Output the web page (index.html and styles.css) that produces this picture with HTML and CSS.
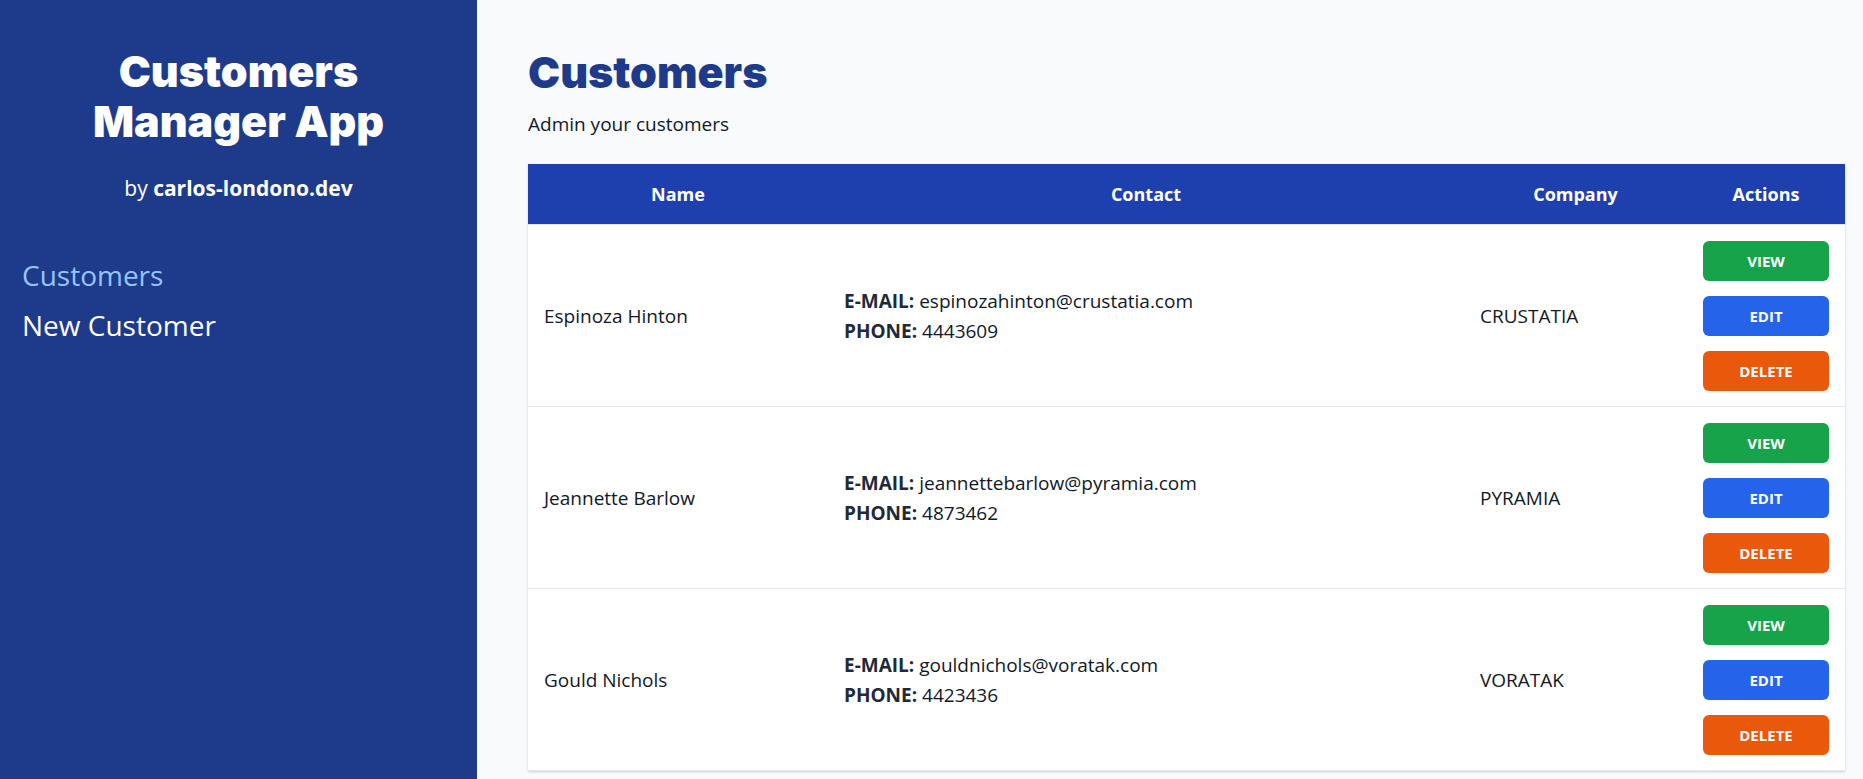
FILE: index.html
```html
<!DOCTYPE html>
<html lang="en">
<head>
<meta charset="utf-8">
<title>Customers Manager App</title>
<link rel="stylesheet" href="styles.css">
</head>
<body>
<div class="layout">
  <aside class="sidebar">
    <h1 class="brand">Customers Manager App</h1>
    <p class="byline">by <strong>carlos-londono.dev</strong></p>
    <nav class="nav">
      <a class="nav-link active" href="#">Customers</a>
      <a class="nav-link" href="#">New Customer</a>
    </nav>
  </aside>
  <main class="main">
    <h2 class="page-title">Customers</h2>
    <p class="page-sub">Admin your customers</p>
    <table class="table">
      <colgroup>
        <col class="col-name">
        <col class="col-contact">
        <col class="col-company">
        <col class="col-actions">
      </colgroup>
      <thead>
        <tr>
          <th>Name</th>
          <th>Contact</th>
          <th>Company</th>
          <th>Actions</th>
        </tr>
      </thead>
      <tbody>
        <tr>
          <td>Espinoza Hinton</td>
          <td><p class="line"><b>E-MAIL:</b> espinozahinton@crustatia.com</p><p class="line"><b>PHONE:</b> 4443609</p></td>
          <td>CRUSTATIA</td>
          <td class="actions"><button class="btn btn-view">View</button><button class="btn btn-edit">Edit</button><button class="btn btn-delete">Delete</button></td>
        </tr>
        <tr>
          <td>Jeannette Barlow</td>
          <td><p class="line"><b>E-MAIL:</b> jeannettebarlow@pyramia.com</p><p class="line"><b>PHONE:</b> 4873462</p></td>
          <td>PYRAMIA</td>
          <td class="actions"><button class="btn btn-view">View</button><button class="btn btn-edit">Edit</button><button class="btn btn-delete">Delete</button></td>
        </tr>
        <tr>
          <td>Gould Nichols</td>
          <td><p class="line"><b>E-MAIL:</b> gouldnichols@voratak.com</p><p class="line"><b>PHONE:</b> 4423436</p></td>
          <td>VORATAK</td>
          <td class="actions"><button class="btn btn-view">View</button><button class="btn btn-edit">Edit</button><button class="btn btn-delete">Delete</button></td>
        </tr>
      </tbody>
    </table>
  </main>
</div>
</body>
</html>
```
FILE: styles.css
```css
* { box-sizing: border-box; }
html, body { margin: 0; padding: 0; height: 100%; }
body {
  font-family: "Open Sans", "Noto Sans", sans-serif;
  color: #111827;
  background: #f8fafc;
  overflow: hidden;
}
.layout {
  display: flex;
  height: 100vh;
}
.sidebar {
  width: 477px;
  flex: none;
  background: #1e3a8a;
  color: #fff;
  padding: 46px 0 0 0;
}
.brand {
  margin: 0 auto;
  width: 340px;
  text-align: center;
  font-family: "Inter", "Open Sans", sans-serif;
  font-weight: 900;
  font-size: 43px;
  line-height: 50px;
}
.byline {
  margin: 28px 0 0;
  text-align: center;
  font-size: 21px;
  line-height: 28px;
}
.byline strong { font-weight: 700; }
.nav {
  display: flex;
  flex-direction: column;
  padding: 48px 0 0 22px;
}
.nav-link {
  color: #fff;
  text-decoration: none;
  font-size: 28px;
  line-height: 50px;
}
.nav-link.active { color: #93c5fd; }
.main {
  flex: 1;
  padding: 44px 18px 0 51px;
  min-width: 0;
}
.page-title {
  margin: 0;
  font-family: "Inter", "Open Sans", sans-serif;
  font-weight: 900;
  font-size: 43px;
  line-height: 56px;
  color: #1e3a8a;
}
.page-sub {
  margin: 12px 0 0;
  font-size: 19px;
  line-height: 24px;
}
.table {
  margin-top: 28px;
  width: 100%;
  table-layout: fixed;
  border-collapse: collapse;
  background: #fff;
  box-shadow: 0 1px 3px rgba(0,0,0,.12), 0 1px 2px rgba(0,0,0,.06);
}
.col-name { width: 300px; }
.col-contact { width: 636px; }
.col-company { width: 223px; }
.col-actions { width: 158px; }
.table thead tr { background: #1e40af; }
.table th {
  color: #fff;
  font-weight: 700;
  font-size: 18px;
  height: 60px;
  padding: 0 16px;
  text-align: center;
  border-bottom: 1px solid #e5e7eb;
}
.table td {
  padding: 16px 16px 15px;
  font-size: 19px;
  vertical-align: middle;
  border-bottom: 1px solid #e5e7eb;
}
.line {
  margin: 0;
  line-height: 30px;
}
.line b { color: #1f2937; font-weight: 700; }
.actions {
  display: flex;
  flex-direction: column;
  gap: 15px;
}
.btn {
  height: 40px;
  border: 0;
  border-radius: 6px;
  color: #fff;
  font-family: "Open Sans", sans-serif;
  font-weight: 700;
  font-size: 15px;
  text-transform: uppercase;
  cursor: pointer;
}
.btn-view { background: #16a34a; }
.btn-edit { background: #2563eb; }
.btn-delete { background: #ea580c; }
```
